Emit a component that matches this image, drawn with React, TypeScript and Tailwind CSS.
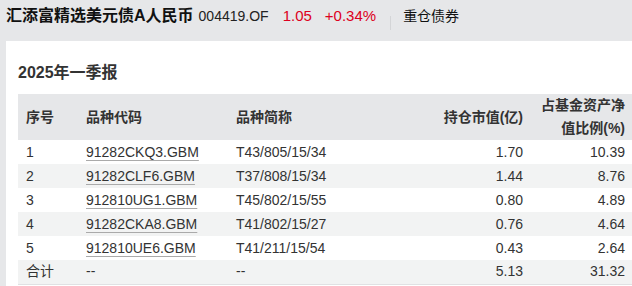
import React from "react";

const rows = [
  { n: "1", code: "91282CKQ3.GBM", name: "T43/805/15/34", v: "1.70", p: "10.39" },
  { n: "2", code: "91282CLF6.GBM", name: "T37/808/15/34", v: "1.44", p: "8.76" },
  { n: "3", code: "912810UG1.GBM", name: "T45/802/15/55", v: "0.80", p: "4.89" },
  { n: "4", code: "91282CKA8.GBM", name: "T41/802/15/27", v: "0.76", p: "4.64" },
  { n: "5", code: "912810UE6.GBM", name: "T41/211/15/54", v: "0.43", p: "2.64" },
];

export default function App() {
  return (
    <div
      className="w-[632px] h-[286px] overflow-hidden bg-[#e6e7e9] text-[#333]"
      style={{ fontFamily: '"Liberation Sans", "Noto Sans CJK SC", sans-serif' }}
    >
      <div className="h-[41px] flex items-baseline pl-[6px] pt-[4px] leading-[24px] whitespace-nowrap">
        <span className="text-[16px] font-bold text-[#111]">汇添富精选美元债A人民币</span>
        <span className="ml-[5px] text-[14px] text-[#222]">004419.OF</span>
        <span className="ml-[14px] text-[15px] text-[#dd0020]">1.05</span>
        <span className="ml-[13px] text-[15px] text-[#dd0020]">+0.34%</span>
        <span className="ml-[14px] self-center w-px h-[14px] bg-[#d4d5d7]" />
        <span className="ml-[12px] text-[14px] text-[#111]">重仓债券</span>
      </div>
      <div className="ml-[6px] bg-white h-[245px] pl-[12px] pt-[20px]">
        <div className="text-[16px] font-bold leading-[24px] text-[#333]">2025年一季报</div>
        <table className="mt-[9px] w-[616px] table-fixed border-collapse text-[14px]">
          <colgroup>
            <col className="w-[60px]" />
            <col className="w-[150px]" />
            <col className="w-[183px]" />
            <col className="w-[120px]" />
            <col className="w-[103px]" />
          </colgroup>
          <thead>
            <tr className="bg-[#e6e7e9] h-[45px] font-bold text-[#333]">
              <th className="text-left px-[8px] font-bold">序号</th>
              <th className="text-left px-[8px] font-bold">品种代码</th>
              <th className="text-left px-[8px] font-bold">品种简称</th>
              <th className="text-right px-[8px] font-bold">持仓市值(亿)</th>
              <th className="text-right pl-[8px] pr-[9px] font-bold leading-[23px]">占基金资产净值比例(%)</th>
            </tr>
          </thead>
          <tbody>
            {rows.map((r, i) => (
              <tr key={r.n} className={`h-[24px] ${i % 2 === 1 ? "bg-[#f2f3f3]" : "bg-white"}`}>
                <td className="px-[8px]">{r.n}</td>
                <td className="px-[8px]">
                  <span className="underline decoration-[#aaa] underline-offset-[3px]">{r.code}</span>
                </td>
                <td className="px-[8px]">{r.name}</td>
                <td className="px-[8px] text-right">{r.v}</td>
                <td className="pl-[8px] pr-[9px] text-right">{r.p}</td>
              </tr>
            ))}
            <tr className="h-[24px] bg-[#f2f3f3] border-b border-[#e0e1e3]">
              <td className="px-[8px]">合计</td>
              <td className="px-[8px]">--</td>
              <td className="px-[8px]">--</td>
              <td className="px-[8px] text-right">5.13</td>
              <td className="pl-[8px] pr-[9px] text-right">31.32</td>
            </tr>
          </tbody>
        </table>
      </div>
    </div>
  );
}
